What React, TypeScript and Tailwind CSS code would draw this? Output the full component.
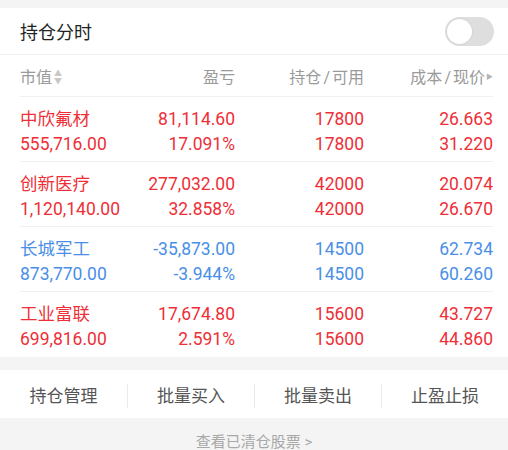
import React from 'react';

type Row = {
  name: string;
  value: string;
  pl: string;
  pct: string;
  hold: string;
  avail: string;
  cost: string;
  price: string;
  up: boolean;
};

const rows: Row[] = [
  { name: '中欣氟材', value: '555,716.00', pl: '81,114.60', pct: '17.091%', hold: '17800', avail: '17800', cost: '26.663', price: '31.220', up: true },
  { name: '创新医疗', value: '1,120,140.00', pl: '277,032.00', pct: '32.858%', hold: '42000', avail: '42000', cost: '20.074', price: '26.670', up: true },
  { name: '长城军工', value: '873,770.00', pl: '-35,873.00', pct: '-3.944%', hold: '14500', avail: '14500', cost: '62.734', price: '60.260', up: false },
  { name: '工业富联', value: '699,816.00', pl: '17,674.80', pct: '2.591%', hold: '15600', avail: '15600', cost: '43.727', price: '44.860', up: true },
];

const actions = ['持仓管理', '批量买入', '批量卖出', '止盈止损'];

const font = { fontFamily: 'Roboto, "Noto Sans CJK SC", sans-serif' };

export default function App() {
  return (
    <div className="w-[508px] h-[450px] bg-[#f4f4f4] pt-2 overflow-hidden" style={font}>
      {/* header */}
      <div className="bg-white">
        <div className="h-[47px] flex items-center justify-between pl-5 pr-[14px] border-b border-[#eeeeee]">
          <span className="text-[18px] text-[#222] pt-[2px]">持仓分时</span>
          <div className="w-[49px] h-[29px] rounded-full bg-[#dedede] p-[2px] flex items-center">
            <div className="w-[25px] h-[25px] rounded-full bg-white shadow-[0_0_0_1px_#d6d6d6]" />
          </div>
        </div>

        <div className="pl-5 pr-[15px]">
          <div className="h-[42px] pt-[4px] grid grid-cols-[minmax(0,1fr)_129px_129px_129px] items-center text-[16px] text-[#9a9a9a] border-b border-[#f0f0f0]">
            <div className="flex items-center gap-[2px]">
              <span>市值</span>
              <span className="flex flex-col leading-[8px] text-[8px] text-[#c8c8c8]">
                <span>▲</span>
                <span>▼</span>
              </span>
            </div>
            <div className="text-right">盈亏</div>
            <div className="text-right">
              持仓<span className="mx-[2px]">/</span>可用
            </div>
            <div className="text-right flex items-center justify-end">
              成本<span className="mx-[2px]">/</span>现价<span className="text-[7px] text-[#b5b5b5] ml-[1px]">▶</span>
            </div>
          </div>

          {rows.map((r, i) => (
            <div
              key={r.name}
              className={`h-[65px] pt-[10px] grid grid-cols-[minmax(0,1fr)_129px_129px_129px] content-start text-[17.5px] leading-[25px] border-b ${
                r.up ? 'text-[#ee2f37]' : 'text-[#4a8fe7]'
              } ${i < rows.length - 1 ? 'border-[#f0f0f0]' : 'border-transparent'}`}
            >
              <div className="whitespace-nowrap">
                <div>{r.name}</div>
                <div>{r.value}</div>
              </div>
              <div className="text-right">
                <div>{r.pl}</div>
                <div>{r.pct}</div>
              </div>
              <div className="text-right">
                <div>{r.hold}</div>
                <div>{r.avail}</div>
              </div>
              <div className="text-right">
                <div>{r.cost}</div>
                <div>{r.price}</div>
              </div>
            </div>
          ))}
        </div>
      </div>

      {/* actions */}
      <div className="mt-[13px] bg-white h-[48px] pt-[3px] grid grid-cols-4 items-center">
        {actions.map((a, i) => (
          <div
            key={a}
            className={`text-center text-[17px] text-[#555] leading-[24px] ${i > 0 ? 'border-l border-[#ebebeb]' : ''}`}
          >
            {a}
          </div>
        ))}
      </div>

      <div className="pt-[13px] text-center text-[15px] text-[#a8a8a8]">查看已清仓股票 &gt;</div>
    </div>
  );
}
